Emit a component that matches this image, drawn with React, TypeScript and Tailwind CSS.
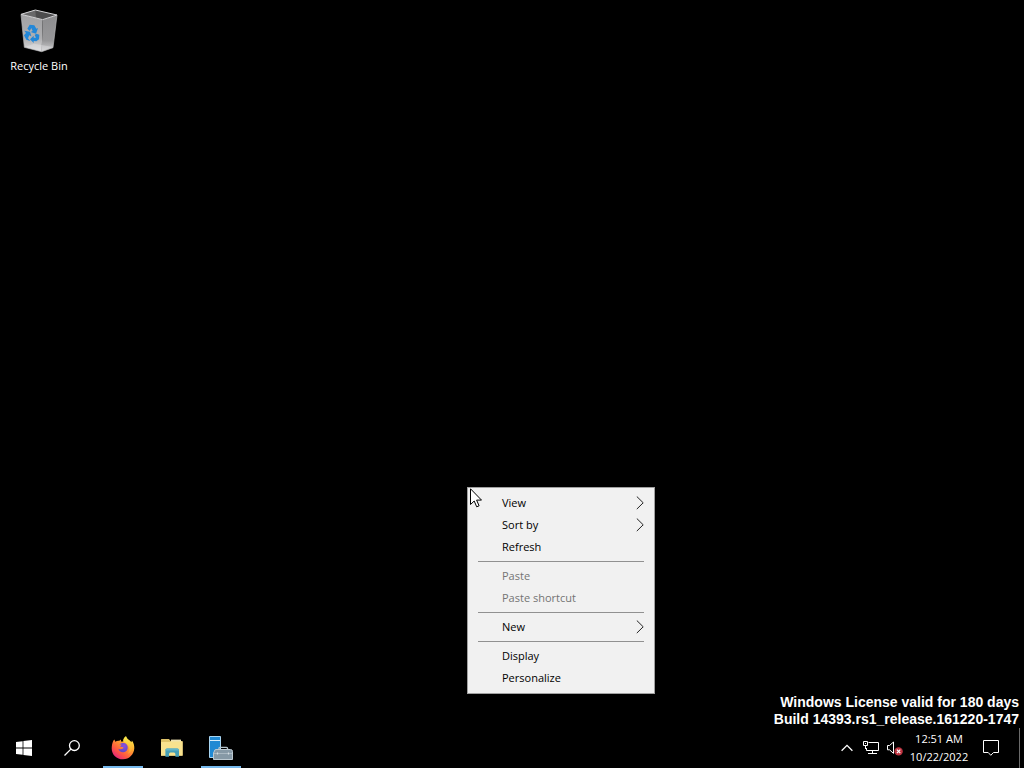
import { ReactNode } from "react";
import clsx from "clsx";

type MenuEntry = { label: string; submenu?: boolean; disabled?: boolean };

const MENU_GROUPS: MenuEntry[][] = [
  [{ label: "View", submenu: true }, { label: "Sort by", submenu: true }, { label: "Refresh" }],
  [
    { label: "Paste", disabled: true },
    { label: "Paste shortcut", disabled: true },
  ],
  [{ label: "New", submenu: true }],
  [{ label: "Display" }, { label: "Personalize" }],
];

function RecycleBinIcon() {
  return (
    <svg viewBox="0 0 126 144" className="w-[42px] h-12" aria-hidden="true">
      <defs>
        <linearGradient id="bin-left" x1="0" y1="0" x2="0" y2="1">
          <stop offset="0" stopColor="#a2a2a4" />
          <stop offset="0.65" stopColor="#b0b0b2" />
          <stop offset="1" stopColor="#dededf" />
        </linearGradient>
        <linearGradient id="bin-right" x1="0" y1="0" x2="0" y2="1">
          <stop offset="0" stopColor="#8c8c8e" />
          <stop offset="0.7" stopColor="#98989a" />
          <stop offset="1" stopColor="#d0d0d2" />
        </linearGradient>
      </defs>
      <path d="M9 19 74 35 71 131 19 118Z" fill="url(#bin-left)" />
      <path d="M74 35 117 21 105 119 71 131Z" fill="url(#bin-right)" />
      <path d="M9 19 52 6 117 21 74 35Z" fill="#4c4c4d" />
      <path d="M52 6 54 30 9 19Z" fill="#686869" />
      <path d="M19 118 48 107 105 117 71 130Z" fill="#e6e6e8" opacity="0.4" />
      <path d="M9 19 52 6 117 21 74 35Z" fill="none" stroke="#d4d4d6" strokeWidth="3" strokeLinejoin="round" />
      <path d="M9 19 19 118 71 131 105 119 117 21" fill="none" stroke="#b9b9bb" strokeWidth="2" />
      <g fill="#2287d8">
        <path d="M28 62 35 50 49 52 55 62 60 60 54 77 38 72 44 69 40 60 35 69Z" />
        <path d="M19 68 36 71 40 85 34 82 30 91 37 99 25 95 18 82 24 75Z" />
        <path d="M55 77 64 80 63 94 55 100 47 99 47 105 36 94 47 83 47 89 54 89 50 81Z" />
      </g>
    </svg>
  );
}

function WindowsIcon() {
  return (
    <svg viewBox="0 0 16 16" className="size-4" fill="#fff" aria-hidden="true">
      <path d="M0 2.1 6.6 1.2V7.6H0ZM7.4 1.1 16 0V7.6H7.4ZM0 8.4H6.6V14.8L0 13.9ZM7.4 8.4H16V16L7.4 14.9Z" />
    </svg>
  );
}

function SearchIcon() {
  return (
    <svg viewBox="0 0 16 16" className="size-4" fill="none" stroke="#fff" strokeWidth="1.3" aria-hidden="true">
      <circle cx="10.4" cy="5.6" r="4.9" />
      <path d="M6.9 9.1.5 15.5" />
    </svg>
  );
}

function FirefoxIcon() {
  return (
    <svg viewBox="0 0 24 24" className="size-6" aria-hidden="true">
      <defs>
        <linearGradient id="fx-body" x1="0.85" y1="0.1" x2="0.2" y2="0.95">
          <stop offset="0" stopColor="#ffe84a" />
          <stop offset="0.35" stopColor="#ffa02e" />
          <stop offset="0.7" stopColor="#ff5a40" />
          <stop offset="1" stopColor="#e4257c" />
        </linearGradient>
        <radialGradient id="fx-globe" cx="0.6" cy="0.3" r="0.8">
          <stop offset="0" stopColor="#8a50dc" />
          <stop offset="1" stopColor="#5a46c4" />
        </radialGradient>
        <linearGradient id="fx-flame" x1="0" y1="0" x2="0" y2="1">
          <stop offset="0" stopColor="#f6ee4a" />
          <stop offset="1" stopColor="#ff9e30" />
        </linearGradient>
      </defs>
      <path
        d="M2.2 5C2.5 4.4 2.9 3.9 3.4 3.5L4.3 5.8C5.5 4.9 7 4.6 8.3 4.8L9.9 3.4 10 5.6 12.4 5.6C12 3.3 13.2 1.4 15 .3 15.4 2.3 17 3.4 18.8 4.8L20.4 6.2 20.9 4.4C22.7 6.8 23.4 9.4 23.3 12.3 23 18.5 18.2 23.3 12 23.3 5.6 23.3.7 18.6.7 12.4.7 9.7 1.2 7.2 2.2 5Z"
        fill="url(#fx-body)"
      />
      <path
        d="M12.4 5.6C12 3.3 13.2 1.4 15 .3 15.4 2.3 17 3.4 18.8 4.8 21.3 7.1 22 10.5 20.6 14 19.8 16 18.4 17.2 17 17.7 18.8 15 18.8 11.2 16.6 8.7 15.4 7.4 13.8 6.4 12.4 5.6Z"
        fill="url(#fx-flame)"
      />
      <path
        d="M8.2 8.6C9.6 7.2 11.4 6.6 13.2 7.1 16 7.9 17.2 10.2 16.6 12.8 16 15.2 14.2 16.4 12 16.3 9.6 16.2 7.8 14.8 7.4 12.8 8.6 13.5 9.7 13.5 10.7 13.1L12.3 12.2C12.7 11.4 11.9 11 10.7 11L9.2 10.8C9.4 9.9 10 9.4 10.7 8.8 9.8 8.4 9 8.4 8.2 8.6Z"
        fill="url(#fx-globe)"
      />
    </svg>
  );
}

function ExplorerIcon() {
  return (
    <svg viewBox="0 0 22 20" className="w-[22px] h-5" aria-hidden="true">
      <path d="M0 1.6Q0 1 .6 1H8L9.6 3H21Q21.6 3 21.6 3.6V17.6H0Z" fill="#dfc46a" />
      <path d="M10 1.6H20V4H10Z" fill="#efe3b0" />
      <path d="M0 4H9.4L11 3.4H21.6V17.8H0Z" fill="#f8e28e" />
      <path d="M4.4 18.8V12Q4.4 10.4 6 10.4H16.4Q18 10.4 18 12V18.8H14.4V16.2Q14.4 14.6 13 14.6H9.4Q8 14.6 8 16.2V18.8Z" fill="#459fb6" />
      <path d="M4.4 12Q4.4 10.4 6 10.4H16.4Q18 10.4 18 12V12.4H4.4Z" fill="#62b5c8" />
    </svg>
  );
}

function ServerManagerIcon() {
  return (
    <svg viewBox="0 0 26 26" className="size-[26px]" aria-hidden="true">
      <path d="M1.5 1.5H12.5V22.5H1.5Z" fill="#2089d3" stroke="#a8d5f2" />
      <path d="M2 5.5H12" stroke="#d7edfa" />
      <path d="M11 14.5V13.2Q11 12.4 12 12.4H18.5Q19.5 12.4 19.5 13.2V14.5" fill="none" stroke="#b4c2ca" strokeWidth="1.4" />
      <path d="M6.5 16Q6.5 14.5 8 14.5H22.5Q24.5 14.5 24.5 16.5V24.5H5.5V18Z" fill="#8699a6" stroke="#bcc9d1" />
      <path d="M6 18.5H24" stroke="#a9b8c2" />
      <path d="M9.5 17.5V19.5M20.5 17.5V19.5" stroke="#d3dce1" strokeWidth="1.2" />
    </svg>
  );
}

function NetworkIcon() {
  return (
    <svg viewBox="0 0 18 16" className="w-[18px] h-4" fill="none" stroke="#fff" aria-hidden="true">
      <path d="M6.5 2.5H16.5V10.5H4.5V8M10.5 10.5V13.5M6 13.5H15" />
      <path d="M1.5 1.5H5.5V5.5H1.5ZM3.5 5.5V9" />
      <path d="M3 3.5H4" />
    </svg>
  );
}

function VolumeIcon() {
  return (
    <svg viewBox="0 0 18 16" className="w-[18px] h-4" fill="none" aria-hidden="true">
      <path d="M1.5 5.5H3.5L7.5 2V13.4L3.5 9.8H1.5Z" stroke="#fff" />
      <circle cx="12.6" cy="11.4" r="4.2" fill="#bd3340" />
      <path d="M10.9 9.7 14.3 13.1M14.3 9.7 10.9 13.1" stroke="#fff" strokeWidth="1.2" />
    </svg>
  );
}

function ActionCenterIcon() {
  return (
    <svg viewBox="0 0 16 16" className="size-4" fill="none" stroke="#fff" aria-hidden="true">
      <path d="M.5.5H15.5V12.5H10.5L7.8 15.3 5.2 12.5H.5Z" />
    </svg>
  );
}

function TaskButton({ label, running, children }: { label: string; running?: boolean; children: ReactNode }) {
  return (
    <button
      aria-label={label}
      className="relative flex h-10 w-12 items-center justify-center hover:bg-white/10"
    >
      {children}
      {running && <span className="absolute inset-x-1 bottom-0 h-0.5 bg-[#76b9ed]" />}
    </button>
  );
}

function TrayButton({ label, children }: { label: string; children: ReactNode }) {
  return (
    <button aria-label={label} className="flex h-10 w-6 items-center justify-center hover:bg-white/10">
      {children}
    </button>
  );
}

function ContextMenu() {
  return (
    <div
      role="menu"
      aria-label="Desktop"
      className="absolute top-[487px] left-[467px] w-[188px] border border-[#a0a0a0] bg-[#f1f1f1] py-1"
    >
      {MENU_GROUPS.map((group, i) => (
        <div key={i} role="group">
          {i > 0 && <hr className="mx-2.5 my-[3px] border-t border-[#919191]" />}
          {group.map((entry) => (
            <button
              key={entry.label}
              role="menuitem"
              disabled={entry.disabled}
              className={clsx(
                "flex h-[22px] w-full items-center justify-between pr-2.5 pl-[34px] text-left",
                entry.disabled ? "text-[#747474]" : "text-black hover:bg-white",
              )}
            >
              {entry.label}
              {entry.submenu && (
                <svg viewBox="0 0 8 14" className="h-3.5 w-2" fill="none" stroke="#222" aria-hidden="true">
                  <path d="M.8.5 7.2 6.8 .8 13.1" />
                </svg>
              )}
            </button>
          ))}
        </div>
      ))}
    </div>
  );
}

function Cursor() {
  return (
    <svg viewBox="0 0 12 20" className="pointer-events-none absolute top-[488px] left-[470px] h-5 w-3" aria-hidden="true">
      <path
        d="M.5.8V16.5L4.2 13 6.7 18.8 9.1 17.8 6.6 12.1H11.5Z"
        fill="#fff"
        stroke="#000"
        strokeLinejoin="round"
      />
    </svg>
  );
}

export default function App() {
  return (
    <div className="relative flex h-screen flex-col overflow-hidden bg-black font-['Open_Sans',sans-serif] text-[11px] text-white select-none">
      <main className="flex flex-1 flex-col items-start justify-between">
        <button className="flex w-[78px] flex-col items-center pt-2">
          <RecycleBinIcon />
          <span className="leading-5">Recycle Bin</span>
        </button>
        <div className="self-end pr-[5px] text-right font-['Liberation_Sans',sans-serif] text-[14px] leading-[17px] font-bold">
          <p>Windows License valid for 180 days</p>
          <p>Build 14393.rs1_release.161220-1747</p>
        </div>
      </main>

      <footer className="flex h-10 items-center justify-between">
        <nav aria-label="Taskbar" className="flex">
          <TaskButton label="Start">
            <WindowsIcon />
          </TaskButton>
          <TaskButton label="Search">
            <SearchIcon />
          </TaskButton>
          <div className="ml-[3px] flex gap-px">
            <TaskButton label="Firefox" running>
              <FirefoxIcon />
            </TaskButton>
            <TaskButton label="File Explorer">
              <ExplorerIcon />
            </TaskButton>
            <TaskButton label="Server Manager" running>
              <ServerManagerIcon />
            </TaskButton>
          </div>
        </nav>

        <div className="flex items-center">
          <TrayButton label="Show hidden icons">
            <svg viewBox="0 0 12 8" className="h-2 w-3" fill="none" stroke="#fff" strokeWidth="1.3" aria-hidden="true">
              <path d="M.6 6.8 6 1.4 11.4 6.8" />
            </svg>
          </TrayButton>
          <TrayButton label="Network">
            <NetworkIcon />
          </TrayButton>
          <TrayButton label="Volume muted">
            <VolumeIcon />
          </TrayButton>
          <button className="flex h-10 w-16 flex-col items-center justify-center leading-[18px] hover:bg-white/10">
            <span>12:51 AM</span>
            <span>10/22/2022</span>
          </button>
          <button aria-label="Action Center" className="mr-2 flex h-10 w-10 items-center justify-center hover:bg-white/10">
            <ActionCenterIcon />
          </button>
          <button aria-label="Show desktop" className="h-10 w-[5px] border-l border-[#6a6a6a]" />
        </div>
      </footer>

      <ContextMenu />
      <Cursor />
    </div>
  );
}
